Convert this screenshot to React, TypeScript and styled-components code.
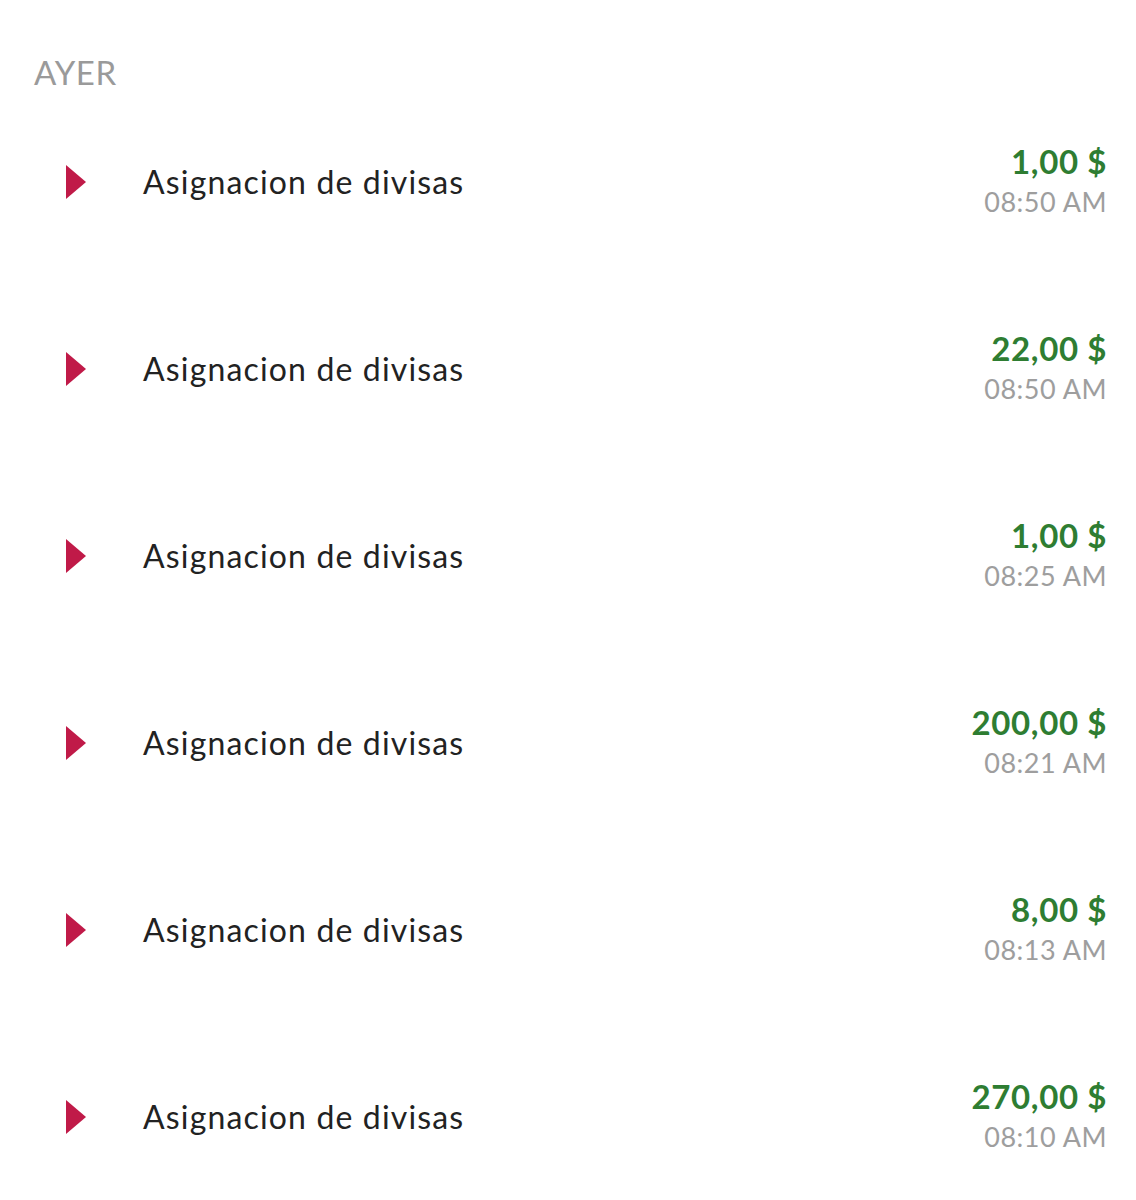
import styled, { createGlobalStyle } from "styled-components";

const GlobalStyle = createGlobalStyle`
  body {
    margin: 0;
    background: #ffffff;
    font-family: "Lato", "Open Sans", sans-serif;
  }
`;

interface Movement {
    concept: string,
    amount: string,
    time: string
}

const movements: Movement[] = [
    {concept: "Asignacion de divisas", amount: "1,00 $", time: "08:50 AM"},
    {concept: "Asignacion de divisas", amount: "22,00 $", time: "08:50 AM"},
    {concept: "Asignacion de divisas", amount: "1,00 $", time: "08:25 AM"},
    {concept: "Asignacion de divisas", amount: "200,00 $", time: "08:21 AM"},
    {concept: "Asignacion de divisas", amount: "8,00 $", time: "08:13 AM"},
    {concept: "Asignacion de divisas", amount: "270,00 $", time: "08:10 AM"},
];

const Arrow = () => (
    <ArrowIcon viewBox="0 0 20 34">
        <polygon points="0,0 20,17 0,34" fill="#c01a48"/>
    </ArrowIcon>
)

export default function App() {
    return (
        <Page>
            <GlobalStyle/>
            <DayLabel>AYER</DayLabel>
            <List>
                {movements.map((m, i) => (
                    <Row key={i}>
                        <Arrow/>
                        <Concept>{m.concept}</Concept>
                        <AmountBlock>
                            <Amount>{m.amount}</Amount>
                            <Time>{m.time}</Time>
                        </AmountBlock>
                    </Row>
                ))}
            </List>
        </Page>
    )
}

const Page = styled.div`
  width: 1136px;
  height: 1200px;
  overflow: hidden;
  background: #ffffff;
`;

const DayLabel = styled.div`
  height: 88px;
  padding: 56px 0 0 34px;
  box-sizing: border-box;
  font-size: 33px;
  line-height: 32px;
  color: #9a9a9a;
  letter-spacing: 0.6px;
`;

const List = styled.div`
  display: flex;
  flex-direction: column;
`;

const Row = styled.div`
  height: 187px;
  display: flex;
  align-items: center;
  padding-left: 66px;
  padding-right: 29px;
`;

const ArrowIcon = styled.svg`
  width: 20px;
  height: 34px;
  flex-shrink: 0;
`;

const Concept = styled.div`
  margin-left: 57px;
  flex: 1;
  font-size: 32px;
  color: #222222;
  letter-spacing: 1.15px;
`;

const AmountBlock = styled.div`
  display: flex;
  flex-direction: column;
  align-items: flex-end;
  gap: 6px;
  margin-top: -4px;
`;

const Amount = styled.div`
  font-size: 33px;
  font-weight: 700;
  color: #2e7d32;
  line-height: 38px;
  letter-spacing: 0.6px;
`;

const Time = styled.div`
  font-size: 27px;
  color: #9e9e9e;
  letter-spacing: 0.5px;
  line-height: 32px;
`;
